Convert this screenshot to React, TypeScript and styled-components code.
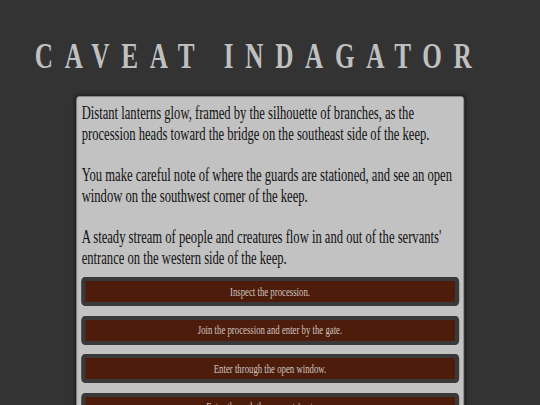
import React from 'react';
import styled, { createGlobalStyle } from 'styled-components';

// The reference is a horizontally squeezed capture, so the page is laid out
// wider and squeezed back with one scaleX on the stage.
const SQUEEZE = 0.7;
const VIEW_WIDTH = 540;

const GlobalStyle = createGlobalStyle`
  html, body {
    margin: 0;
    padding: 0;
    background: #333333;
    overflow: hidden;
  }
  body {
    font-family: "Liberation Serif", "Times New Roman", serif;
  }
`;

const Stage = styled.div`
  width: ${VIEW_WIDTH / SQUEEZE}px;
  transform: scaleX(${SQUEEZE});
  transform-origin: left top;
  padding-top: 36px;
  display: flex;
  flex-direction: column;
  align-items: center;
`;

const Title = styled.h1`
  margin: 0 0 19px;
  padding-right: 31px;
  font-family: "Liberation Serif", "Times New Roman", serif;
  font-size: 36px;
  line-height: 41px;
  font-weight: bold;
  letter-spacing: 16.7px;
  color: #c0c0c0;
  text-transform: uppercase;
`;

const Panel = styled.main`
  width: 554px;
  box-sizing: border-box;
  padding: 6px 6px 8px;
  background: #c2c2c2;
  border: 1px solid #8c8c8c;
  border-radius: 4px;
  box-shadow: 0 0 6px rgba(0, 0, 0, 0.7);
  display: flex;
  flex-direction: column;
`;

const Story = styled.p`
  margin: 0 0 20.67px;
  padding: 0 1px;
  font-size: 18px;
  line-height: 20.67px;
  color: #111111;

  &:last-of-type {
    margin-bottom: 9px;
  }
`;

const Choices = styled.div`
  display: flex;
  flex-direction: column;
  gap: 9.4px;
`;

const Choice = styled.button`
  height: 29px;
  box-sizing: border-box;
  border: solid #393939;
  border-width: 4px 6px;
  border-radius: 5px;
  background: #4d1c0b;
  color: #cfc6c0;
  font-family: "Liberation Serif", "Times New Roman", serif;
  font-size: 12.5px;
  text-align: center;
  padding: 1px 0 0;
  cursor: pointer;
`;

const passages = [
  'Distant lanterns glow, framed by the silhouette of branches, as the procession heads toward the bridge on the southeast side of the keep.',
  'You make careful note of where the guards are stationed, and see an open window on the southwest corner of the keep.',
  "A steady stream of people and creatures flow in and out of the servants' entrance on the western side of the keep.",
];

const options = [
  'Inspect the procession.',
  'Join the procession and enter by the gate.',
  'Enter through the open window.',
  "Enter through the servants' entrance.",
];

function App() {
  return (
    <>
      <GlobalStyle />
      <Stage>
        <Title>Caveat Indagator</Title>
        <Panel>
          {passages.map((text) => (
            <Story key={text}>{text}</Story>
          ))}
          <Choices>
            {options.map((label) => (
              <Choice key={label}>{label}</Choice>
            ))}
          </Choices>
        </Panel>
      </Stage>
    </>
  );
}

export default App;
